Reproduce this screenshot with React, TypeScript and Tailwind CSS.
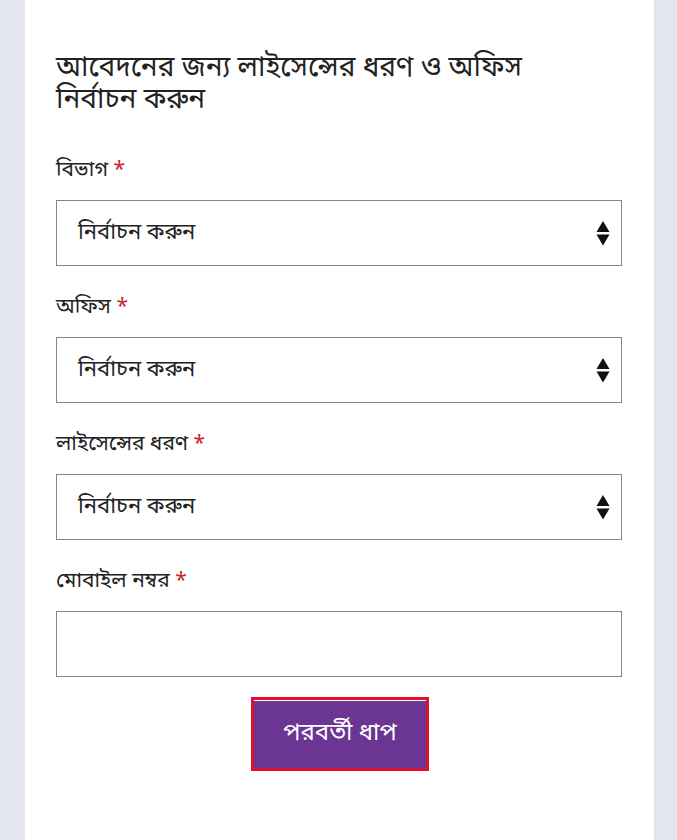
const font = { fontFamily: '"Noto Sans Bengali", "Noto Sans", "Liberation Sans", sans-serif' };

const Arrows = () => (
  <svg width="14" height="25" viewBox="0 0 14 25" className="shrink-0">
    <path d="M7 0 L13.5 11 L0.5 11 Z" fill="#111" />
    <path d="M0.5 13.5 L13.5 13.5 L7 24.5 Z" fill="#111" />
  </svg>
);

const Label = ({ text }: { text: string }) => (
  <label className="block text-[21px] leading-[30px] text-[#222]">
    {text} <span className="text-[#c8262f]">*</span>
  </label>
);

const SelectBox = () => (
  <div className="mt-[14px] flex h-[66px] items-center justify-between border border-[#8c7f96] bg-white pl-[21px] pr-[11px]">
    <span className="text-[22px] text-[#222]">নির্বাচন করুন</span>
    <Arrows />
  </div>
);

export default function App() {
  const fields = ["বিভাগ", "অফিস", "লাইসেন্সের ধরণ"];
  return (
    <div className="min-h-[840px] w-full bg-[#e3e6ee] pl-[25px] pr-[23px]" style={font}>
      <div className="min-h-[840px] bg-white pl-[31px] pr-[32px] pt-[53px] pb-[60px]">
        <h1 className="max-w-[480px] text-[28px] leading-[32px] text-[#222] font-normal">
          আবেদনের জন্য লাইসেন্সের ধরণ ও অফিস নির্বাচন করুন
        </h1>

        <div className="mt-[39px] flex flex-col gap-[27px]">
          {fields.map((f) => (
            <div key={f}>
              <Label text={f} />
              <SelectBox />
            </div>
          ))}
          <div>
            <Label text="মোবাইল নম্বর" />
            <input
              type="text"
              className="mt-[14px] block h-[66px] w-full border border-[#8c7f96] bg-white px-[21px] text-[22px] outline-none"
            />
          </div>
        </div>

        <div className="mt-[20px] flex justify-center pl-[2px]">
          <button className="h-[74px] w-[178px] border-[3px] border-[#e0102e] bg-[#6b3594] text-[24px] text-white shadow-[inset_0_1px_0_#fff]">
            পরবর্তী ধাপ
          </button>
        </div>
      </div>
    </div>
  );
}
